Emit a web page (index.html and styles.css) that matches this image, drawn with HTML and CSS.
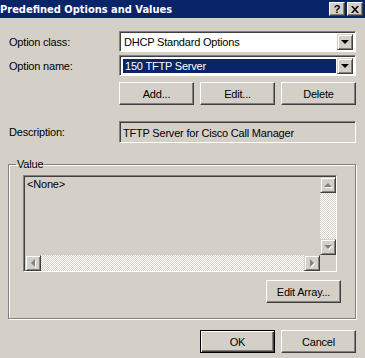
FILE: index.html
```html
<!DOCTYPE html>
<html lang="en">
<head>
    <meta charset="UTF-8">
    <title>Predefined Options and Values</title>
    <link rel="stylesheet" href="styles.css">
</head>
<body>
    <div class="dialog">
        <div class="titlebar">
            <span class="title">Predefined Options and Values</span>
            <div class="caption-btns">
                <span class="cap-btn help">?</span>
                <span class="cap-btn">
                    <svg width="8" height="7" viewBox="0 0 8 7">
                        <path d="M0 0h2l2 2.5L6 0h2L5 3.5 8 7H6L4 4.5 2 7H0l3-3.5z" fill="#000"/>
                    </svg>
                </span>
            </div>
        </div>

        <div class="content">
            <div class="row row-class">
                <label>Option class:</label>
                <div class="combo">
                    <div class="combo-text">DHCP Standard Options</div>
                    <div class="drop-btn"><i class="arrow-down"></i></div>
                </div>
            </div>

            <div class="row row-name">
                <label>Option name:</label>
                <div class="combo">
                    <div class="combo-text"><span class="selected">150 TFTP Server</span></div>
                    <div class="drop-btn"><i class="arrow-down"></i></div>
                </div>
            </div>

            <div class="btn-row">
                <button class="btn">Add...</button>
                <button class="btn">Edit...</button>
                <button class="btn">Delete</button>
            </div>

            <div class="row row-desc">
                <label>Description:</label>
                <div class="readonly">TFTP Server for Cisco Call Manager</div>
            </div>

            <fieldset class="group">
                <legend>Value</legend>
                <div class="listbox">
                    <div class="list-main">
                        <div class="list-items">&lt;None&gt;</div>
                        <div class="vscroll">
                            <div class="sb-btn"><i class="tri tri-up"></i></div>
                            <div class="track"></div>
                            <div class="sb-btn"><i class="tri tri-down"></i></div>
                        </div>
                    </div>
                    <div class="hscroll">
                        <div class="sb-btn"><i class="tri tri-left"></i></div>
                        <div class="track"></div>
                        <div class="sb-btn"><i class="tri tri-right"></i></div>
                        <div class="corner"></div>
                    </div>
                </div>
                <div class="array-row">
                    <button class="btn">Edit Array...</button>
                </div>
            </fieldset>

            <div class="footer">
                <button class="btn default">OK</button>
                <button class="btn">Cancel</button>
            </div>
        </div>
    </div>
</body>
</html>
```

FILE: styles.css
```css
body {
    margin: 0;
    padding: 0;
    background: #d4d0c8;
    font-family: "Liberation Sans", Arial, sans-serif;
    font-size: 11px;
    letter-spacing: -0.2px;
    color: #000;
}
.dialog {
    width: 365px;
    height: 358px;
    background: #d4d0c8;
    overflow: hidden;
}
.titlebar {
    height: 18px;
    background: #0a246a;
    display: flex;
    align-items: center;
    justify-content: space-between;
}
.title {
    color: #fff;
    font-weight: bold;
    font-size: 11px;
    font-family: "DejaVu Sans Condensed", "DejaVu Sans", Verdana, sans-serif;
    font-stretch: condensed;
    letter-spacing: 0;
}
.caption-btns {
    display: flex;
    gap: 2px;
    margin-right: 2px;
}
.cap-btn {
    width: 16px;
    height: 14px;
    box-sizing: border-box;
    background: #d4d0c8;
    border: 1px solid;
    border-color: #fff #404040 #404040 #fff;
    box-shadow: inset -1px -1px #808080;
    display: flex;
    align-items: center;
    justify-content: center;
}
.cap-btn.help {
    font-weight: bold;
    font-size: 11px;
    line-height: 1;
}
.content {
    padding: 13px 9px 0 9px;
}
.row {
    display: flex;
    align-items: center;
}
.row label {
    width: 110px;
}
.row-name {
    margin-top: 3px;
}
.combo {
    width: 237px;
    height: 21px;
    box-sizing: border-box;
    border: 1px solid;
    border-color: #808080 #fff #fff #808080;
    box-shadow: inset 1px 1px #404040;
    background: #fff;
    display: flex;
    padding: 2px 2px 1px 2px;
}
.combo-text {
    flex: 1;
    padding: 1px;
    display: flex;
    align-items: center;
}
.combo-text .selected,
.row-class .combo-text {
    padding-left: 2px;
}
.selected {
    flex: 1;
    align-self: stretch;
    display: flex;
    align-items: center;
    background: #0a246a;
    color: #fff;
}
.drop-btn {
    width: 16px;
    box-sizing: border-box;
    background: #d4d0c8;
    border: 1px solid;
    border-color: #d4d0c8 #404040 #404040 #d4d0c8;
    box-shadow: inset 1px 1px #fff, inset -1px -1px #808080;
    display: flex;
    align-items: center;
    justify-content: center;
}
.arrow-down {
    width: 0;
    height: 0;
    border-left: 4px solid transparent;
    border-right: 4px solid transparent;
    border-top: 4px solid #000;
}
.btn {
    width: 75px;
    height: 23px;
    box-sizing: border-box;
    background: #d4d0c8;
    border: 1px solid;
    border-color: #fff #404040 #404040 #fff;
    box-shadow: inset -1px -1px #808080;
    font-family: "Liberation Sans", Arial, sans-serif;
    font-size: 11px;
    letter-spacing: -0.2px;
    color: #000;
    padding: 0;
}
.btn.default {
    border: 1px solid #000;
    box-shadow: inset 1px 1px #fff, inset -1px -1px #404040, inset -2px -2px #808080;
}
.btn-row {
    display: flex;
    gap: 6px;
    margin: 6px 0 0 110px;
}
.row-desc {
    margin-top: 16px;
}
.readonly {
    width: 237px;
    height: 22px;
    box-sizing: border-box;
    border: 1px solid;
    border-color: #808080 #fff #fff #808080;
    box-shadow: inset 1px 1px #404040;
    padding: 1px 3px 0 3px;
    display: flex;
    align-items: center;
}
.group {
    margin: 15px 0 0 -1px;
    width: 348px;
    box-sizing: border-box;
    border: 1px solid #808080;
    box-shadow: inset 1px 1px #fff, 1px 1px #fff;
    padding: 4px 16px 15px 14px;
    min-width: 0;
}
.group legend {
    margin-left: -7px;
    padding: 0 1px;
    line-height: 13px;
}
.listbox {
    width: 314px;
    height: 97px;
    box-sizing: border-box;
    border: 1px solid;
    border-color: #808080 #fff #fff #808080;
    box-shadow: inset 1px 1px #404040;
    padding: 1px 0 0 1px;
    display: flex;
    flex-direction: column;
}
.list-main {
    flex: 1;
    display: flex;
}
.list-items {
    flex: 1;
    padding: 1px 2px;
}
.vscroll {
    width: 16px;
    display: flex;
    flex-direction: column;
}
.hscroll {
    height: 16px;
    display: flex;
}
.track {
    flex: 1;
    background-color: #fff;
    background-image: conic-gradient(#d4d0c8 25%, #fff 0 50%, #d4d0c8 0 75%, #fff 0);
    background-size: 2px 2px;
}
.sb-btn {
    width: 16px;
    height: 16px;
    box-sizing: border-box;
    background: #d4d0c8;
    border: 1px solid;
    border-color: #d4d0c8 #404040 #404040 #d4d0c8;
    box-shadow: inset 1px 1px #fff, inset -1px -1px #808080;
    display: flex;
    align-items: center;
    justify-content: center;
}
.corner {
    width: 16px;
    height: 16px;
    background: #d4d0c8;
}
.tri {
    width: 0;
    height: 0;
    filter: drop-shadow(1px 1px 0 #fff);
}
.tri-up {
    border-left: 4px solid transparent;
    border-right: 4px solid transparent;
    border-bottom: 4px solid #808080;
}
.tri-down {
    border-left: 4px solid transparent;
    border-right: 4px solid transparent;
    border-top: 4px solid #808080;
}
.tri-left {
    border-top: 4px solid transparent;
    border-bottom: 4px solid transparent;
    border-right: 4px solid #808080;
}
.tri-right {
    border-top: 4px solid transparent;
    border-bottom: 4px solid transparent;
    border-left: 4px solid #808080;
}
.array-row {
    display: flex;
    justify-content: flex-end;
    margin-top: 8px;
    margin-right: -2px;
}
.footer {
    display: flex;
    justify-content: flex-end;
    gap: 6px;
    margin-top: 11px;
}
```
